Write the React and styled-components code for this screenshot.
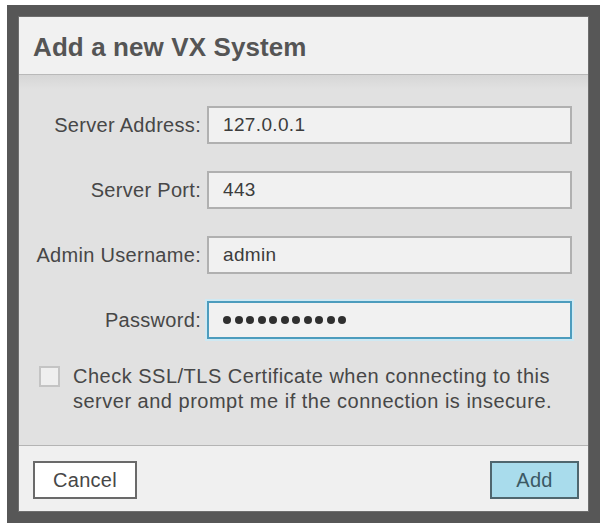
import React from "react";
import styled, { createGlobalStyle } from "styled-components";

const Global = createGlobalStyle`
  html, body { margin: 0; padding: 0; background: #ffffff; }
  body { font-family: "Liberation Sans", Arial, sans-serif; }
  * { box-sizing: border-box; }
`;

const Page = styled.div`
  padding: 5px 0 0 7px;
`;

const Frame = styled.div`
  width: 593px;
  height: 518px;
  border: 11px solid #575757;
  background: #6e6e6e;
  display: flex;
`;

const Panel = styled.div`
  flex: 1;
  margin: 1px;
  display: flex;
  flex-direction: column;
  background: #e1e1e1;
`;

const TitleBar = styled.div`
  height: 58px;
  flex: none;
  display: flex;
  align-items: center;
  padding: 4px 0 0 14px;
  background: #f1f1f1;
  border-bottom: 1px solid #b9b9b9;
`;

const Title = styled.h1`
  margin: 0;
  font-size: 26px;
  font-weight: bold;
  color: #555555;
  letter-spacing: 0.1px;
`;

const Body = styled.div`
  flex: 1;
  padding: 31px 16px 0 0;
  background: linear-gradient(#d6d6d6 0px, #e1e1e1 14px, #e1e1e1 100%);
  border-bottom: 1px solid #b4b4b4;
`;

const Form = styled.div`
  display: grid;
  grid-template-columns: 182px 365px;
  column-gap: 6px;
  row-gap: 27px;
  align-items: center;
`;

const Label = styled.label`
  text-align: right;
  font-size: 20px;
  letter-spacing: 0.3px;
  color: #474747;
`;

const Field = styled.div`
  height: 38px;
  display: flex;
  align-items: center;
  padding: 0 14px;
  font-size: 19px;
  letter-spacing: 0.35px;
  color: #3c3c3c;
  background: #f1f1f1;
  border: ${(p) => (p.$focused ? "2px solid #4d9cbd" : "2px solid #b0b0b0")};
  box-shadow: ${(p) => (p.$focused ? "0 0 0 2px #cfe9f3" : "none")};
`;

const Dots = styled.div`
  display: flex;
  gap: 3.5px;
`;

const Dot = styled.span`
  width: 8px;
  height: 8px;
  border-radius: 50%;
  background: #2f2f2f;
`;

const CheckRow = styled.div`
  display: flex;
  align-items: flex-start;
  gap: 13px;
  margin-top: 25px;
  padding-left: 20px;
`;

const CheckBox = styled.span`
  flex: none;
  width: 21px;
  height: 21px;
  margin-top: 2px;
  background: #efefef;
  border: 2px solid #c4c4c4;
`;

const CheckText = styled.div`
  font-size: 20px;
  letter-spacing: 0.5px;
  line-height: 25px;
  color: #474747;
`;

const Footer = styled.div`
  height: 65px;
  flex: none;
  display: flex;
  justify-content: space-between;
  align-items: flex-start;
  padding: 15px 9px 0 14px;
  background: #f0f0f0;
`;

const Button = styled.button`
  height: 38px;
  width: ${(p) => p.$w}px;
  font-family: "Liberation Sans", Arial, sans-serif;
  font-size: 20px;
  letter-spacing: 0.3px;
  padding: 0;
  border: 2px solid ${(p) => (p.$primary ? "#4f666e" : "#6a6a6a")};
  background: ${(p) => (p.$primary ? "#a9dcec" : "#ffffff")};
  color: ${(p) => (p.$primary ? "#3b5964" : "#474747")};
`;

export default function App() {
  const rows = [
    ["Server Address:", "127.0.0.1"],
    ["Server Port:", "443"],
    ["Admin Username:", "admin"],
  ];
  return (
    <>
      <Global />
      <Page>
        <Frame>
          <Panel>
            <TitleBar>
              <Title>Add a new VX System</Title>
            </TitleBar>
            <Body>
              <Form>
                {rows.map(([l, v]) => (
                  <React.Fragment key={l}>
                    <Label>{l}</Label>
                    <Field>{v}</Field>
                  </React.Fragment>
                ))}
                <Label>Password:</Label>
                <Field $focused>
                  <Dots>
                    {Array.from({ length: 11 }).map((_, i) => (
                      <Dot key={i} />
                    ))}
                  </Dots>
                </Field>
              </Form>
              <CheckRow>
                <CheckBox />
                <CheckText>
                  Check SSL/TLS Certificate when connecting to this
                  <br />
                  server and prompt me if the connection is insecure.
                </CheckText>
              </CheckRow>
            </Body>
            <Footer>
              <Button $w={104}>Cancel</Button>
              <Button $w={89} $primary>
                Add
              </Button>
            </Footer>
          </Panel>
        </Frame>
      </Page>
    </>
  );
}
